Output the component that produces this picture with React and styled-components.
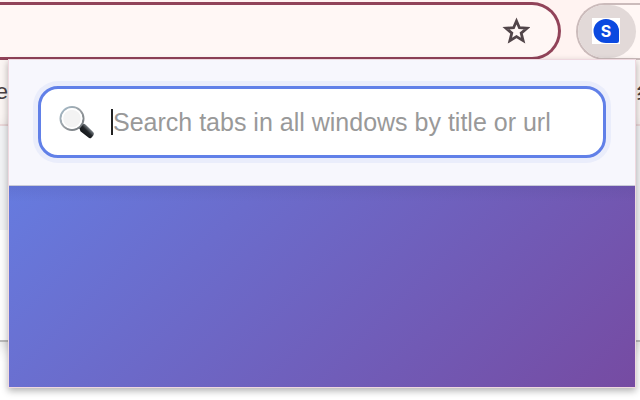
import React from "react";
import styled, { createGlobalStyle } from "styled-components";

const GlobalStyle = createGlobalStyle`
  * { box-sizing: border-box; }
  body {
    margin: 0;
    overflow: hidden;
    background: #ffffff;
    font-family: "Liberation Sans", Arial, "Noto Sans CJK SC", sans-serif;
  }
`;

const Browser = styled.div`
  position: relative;
  display: flex;
  flex-direction: column;
  min-height: 100vh;
`;

const Toolbar = styled.header`
  display: flex;
  align-items: flex-end;
  gap: 15px;
  height: 60px;
  background: #fff3f1;
`;

const AddressBar = styled.div`
  flex: 1;
  display: flex;
  align-items: center;
  justify-content: flex-end;
  height: 58px;
  padding-right: 28px;
  background: #fff7f5;
  border: 3px solid #914359;
  border-left: 0;
  border-radius: 0 29px 29px 0;
`;

const IconButton = styled.button`
  display: flex;
  padding: 0;
  border: 0;
  background: none;
`;

const Extensions = styled.div`
  width: 64px;
  height: 57px;
  background: #fff7f5;
  border: 2px solid #cbbbbb;
  border-right: 0;
  border-radius: 29px 0 0 29px;
`;

const ExtensionButton = styled.button`
  display: flex;
  align-items: center;
  justify-content: center;
  width: 58px;
  height: 53px;
  padding: 0 2px 2px 0;
  border: 0;
  border-radius: 27px;
  background: #e2d9d8;
`;

const Bookmarks = styled.nav`
  display: flex;
  align-items: center;
  justify-content: space-between;
  height: 66px;
  background: #fbf5f3;
  border-bottom: 2px solid #f2dfe0;
  color: #4b4143;
  font-size: 22px;
  line-height: 24px;
  overflow: hidden;
`;

const BookmarkStart = styled.span`
  width: 8px;
  direction: rtl;
  overflow: hidden;
`;

const BookmarkEnd = styled.span`
  width: 4px;
  overflow: hidden;
  white-space: nowrap;
`;

const Page = styled.main`
  height: 216px;
  background: #fdfdfd;
  border-bottom: 2px solid #b9b9b9;
  box-shadow: 0 4px 16px rgba(0, 0, 0, 0.2);
`;

const PageBand = styled.div`
  height: 104px;
  background: #f1f2f4;
`;

const Popup = styled.section`
  position: absolute;
  top: 59px;
  right: 4px;
  left: 8px;
  border: 1px solid #efd8df;
  background: #f7f7fd;
  box-shadow: 0 3px 7px rgba(0, 0, 0, 0.3);
`;

const SearchHeader = styled.div`
  padding: 26px 29px 27px;
  border-bottom: 1px solid #c9cbd8;
`;

const SearchBox = styled.label`
  display: flex;
  align-items: center;
  height: 72px;
  padding-left: 18px;
  border: 3px solid #6180e8;
  border-radius: 20px;
  background: #ffffff;
  box-shadow: 0 0 0 5px #eaedfb;
`;

const Caret = styled.span`
  width: 2px;
  height: 26px;
  margin-left: 16px;
  background: #222222;
`;

const SearchInput = styled.input`
  flex: 1;
  min-width: 0;
  height: 40px;
  padding: 0;
  border: 0;
  outline: 0;
  background: transparent;
  color: #333333;
  font-family: inherit;
  font-size: 25px;

  &::placeholder {
    color: #999999;
    opacity: 1;
  }
`;

const Results = styled.div`
  height: 201px;
  background:
    linear-gradient(180deg, rgba(50, 50, 110, 0.1) 0, rgba(50, 50, 110, 0) 16px),
    linear-gradient(135deg, #667bdf 0%, #764ba2 100%);
`;

function StarIcon() {
  return (
    <svg width="28" height="28" viewBox="0 0 28 28" fill="none" aria-hidden="true">
      <path
        d="M14.5 4 L17.4 10.7 L25 11.2 L19.2 16.1 L21.1 23.6 L14.5 19.6 L7.9 23.6 L9.8 16.1 L4 11.2 L11.6 10.7 Z"
        stroke="#514549"
        strokeWidth="2.8"
      />
    </svg>
  );
}

function ExtensionIcon() {
  return (
    <svg width="28" height="26" viewBox="0 0 28 26" aria-hidden="true">
      <rect width="28" height="26" fill="#ffffff" />
      <path d="M14 1 A12.5 12 0 1 0 14 25 H25 Q27 25 27 23 V13 A13 12 0 0 0 14 1 Z" fill="#0b49e0" />
      <text
        x="14"
        y="19"
        textAnchor="middle"
        fill="#ffffff"
        fontFamily="Inter, sans-serif"
        fontSize="16"
        fontWeight="700"
      >
        S
      </text>
    </svg>
  );
}

function MagnifierIcon() {
  return (
    <svg width="36" height="34" viewBox="0 0 36 34" aria-hidden="true">
      <defs>
        <linearGradient id="rim" x1="0" y1="0" x2="1" y2="1">
          <stop offset="0" stopColor="#a5bccb" />
          <stop offset="0.5" stopColor="#9a9fa3" />
          <stop offset="1" stopColor="#6c7277" />
        </linearGradient>
        <linearGradient id="handle" x1="0" y1="1" x2="1" y2="0">
          <stop offset="0" stopColor="#08090a" />
          <stop offset="0.5" stopColor="#202428" />
          <stop offset="0.72" stopColor="#8b9298" />
          <stop offset="1" stopColor="#202428" />
        </linearGradient>
      </defs>
      <path d="M20.5 21.5 L25 25" stroke="#59636b" strokeWidth="4" />
      <path d="M22.8 19.4 Q25 18 27 20 L34.4 27.2 Q35.6 28.6 34.3 30.4 L32.6 32.4 Q31 34 29.4 32.6 L21.4 26.2 Q20 24.2 21.4 22 Z" fill="url(#handle)" />
      <circle cx="13" cy="13.5" r="11.5" fill="#f3f3f3" stroke="url(#rim)" strokeWidth="2" />
      <circle cx="13" cy="13.5" r="9.6" fill="none" stroke="#ffffff" strokeWidth="1.6" />
    </svg>
  );
}

export default function App() {
  return (
    <>
      <GlobalStyle />
      <Browser>
        <Toolbar>
          <AddressBar>
            <IconButton type="button" aria-label="Bookmark this tab">
              <StarIcon />
            </IconButton>
          </AddressBar>
          <Extensions>
            <ExtensionButton type="button" aria-label="Tab search extension">
              <ExtensionIcon />
            </ExtensionButton>
          </Extensions>
        </Toolbar>
        <Bookmarks>
          <BookmarkStart>e</BookmarkStart>
          <BookmarkEnd>纟</BookmarkEnd>
        </Bookmarks>
        <Page>
          <PageBand />
        </Page>
        <Popup>
          <SearchHeader>
            <SearchBox>
              <MagnifierIcon />
              <Caret />
              <SearchInput
                type="text"
                aria-label="Search tabs"
                placeholder="Search tabs in all windows by title or url"
              />
            </SearchBox>
          </SearchHeader>
          <Results />
        </Popup>
      </Browser>
    </>
  );
}
